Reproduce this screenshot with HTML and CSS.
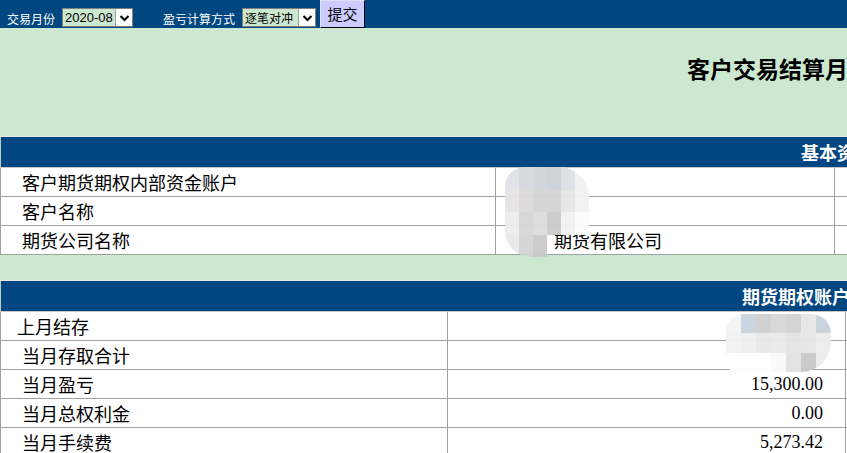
FILE: index.html
```html
<!DOCTYPE html>
<html lang="zh-CN">
<head>
<meta charset="utf-8">
<title>客户交易结算月报</title>
<link rel="stylesheet" href="styles.css">
</head>
<body>
<div class="page">
  <form class="topbar">
    <label class="lbl">交易月份</label>
    <span class="sel sel-month"><span class="sel-text">2020-08</span><span class="sel-btn"><svg width="11" height="8" viewBox="0 0 11 8"><path d="M1.5 2 L5.5 6 L9.5 2" fill="none" stroke="#000" stroke-width="2"/></svg></span></span>
    <label class="lbl lbl2">盈亏计算方式</label>
    <span class="sel sel-mode"><span class="sel-text">逐笔对冲</span><span class="sel-btn"><svg width="11" height="8" viewBox="0 0 11 8"><path d="M1.5 2 L5.5 6 L9.5 2" fill="none" stroke="#000" stroke-width="2"/></svg></span></span>
    <button type="button" class="submit">提交</button>
  </form>

  <div class="title-block">
    <h1 class="title">客户交易结算月报</h1>
  </div>

  <table class="tbl tbl1">
    <colgroup><col class="w1a"><col class="w1b"><col class="w1c"></colgroup>
    <tr><th colspan="3" class="hd hd1">基本资料</th></tr>
    <tr><td class="c1">客户期货期权内部资金账户</td><td class="c2 blur-host"><div class="blur blur1"><i></i><i></i><i></i><i></i><i></i><i></i><i></i><i></i><i></i><i></i><i></i><i></i><i></i><i></i><i></i><i></i><i></i><i></i><i></i><i></i><i></i><i></i><i></i><i></i></div></td><td class="c3"></td></tr>
    <tr><td class="c1">客户名称</td><td class="c2"></td><td class="c3"></td></tr>
    <tr><td class="c1">期货公司名称</td><td class="c2 co">期货有限公司</td><td class="c3"></td></tr>
  </table>

  <table class="tbl tbl2">
    <colgroup><col class="w2a"><col class="w2b"><col class="w2c"></colgroup>
    <tr><th colspan="3" class="hd hd2">期货期权账户资金状况</th></tr>
    <tr><td class="d1 first">上月结存</td><td class="d2 num blur-host"><div class="blur blur2"><i></i><i></i><i></i><i></i><i></i><i></i><i></i><i></i><i></i><i></i><i></i><i></i><i></i><i></i><i></i><i></i><i></i><i></i><i></i><i></i><i></i></div></td><td class="d3"></td></tr>
    <tr><td class="d1">当月存取合计</td><td class="d2 num"></td><td class="d3"></td></tr>
    <tr><td class="d1">当月盈亏</td><td class="d2 num">15,300.00</td><td class="d3"></td></tr>
    <tr><td class="d1">当月总权利金</td><td class="d2 num">0.00</td><td class="d3"></td></tr>
    <tr><td class="d1">当月手续费</td><td class="d2 num">5,273.42</td><td class="d3"></td></tr>
  </table>
</div>
</body>
</html>
```

FILE: styles.css
```css
html, body {
  margin: 0;
  padding: 0;
  background: #cde8d0;
  overflow: hidden;
}
.page {
  width: 1400px;
  font-family: "Noto Sans CJK SC", "Liberation Sans", sans-serif;
}
.topbar {
  display: flex;
  align-items: flex-start;
  height: 28px;
  background: #004680;
  margin: 0;
}
.lbl {
  color: #fff;
  font-size: 12px;
  line-height: 14px;
  margin-top: 12px;
  margin-left: 7px;
}
.lbl2 {
  margin-left: 30px;
}
.sel {
  display: flex;
  align-items: stretch;
  height: 19px;
  margin-top: 8px;
  margin-left: 7px;
  box-sizing: border-box;
  border: 1px solid #7f7f7f;
  background: #cde8d0;
  font-size: 13px;
}
.sel-month { width: 71px; }
.sel-mode { width: 74px; }
.sel-text {
  flex: 1;
  line-height: 17px;
  padding-left: 2px;
  color: #000;
  font-family: "Liberation Sans", "Noto Sans CJK SC", sans-serif;
}
.sel-mode .sel-text { font-family: "Noto Sans CJK SC", sans-serif; font-size: 12px; }
.sel-btn {
  width: 16px;
  background: #fff;
  border-left: 1px solid #a0a0a0;
  display: flex;
  align-items: center;
  justify-content: center;
}
.submit {
  margin-left: 4px;
  width: 45px;
  height: 28px;
  padding: 0;
  border: 1px solid #000;
  border-top-color: #e0e0ff;
  border-left-color: #e0e0ff;
  background: #ccccff;
  font-family: "Noto Sans CJK SC", sans-serif;
  font-size: 15px;
  line-height: 24px;
  color: #000;
}
.title-block {
  height: 108px;
  box-sizing: border-box;
  padding-top: 25px;
}
.title {
  margin: 0;
  padding-left: 687px;
  font-size: 23px;
  line-height: 30px;
  font-weight: bold;
  color: #000;
}
.tbl {
  border-collapse: collapse;
  table-layout: fixed;
  width: 1400px;
  border-top: 1px solid #e8e8e8;
  border-left: 1px solid #c8c8c8;
}
.w1a { width: 495px; }
.w1b { width: 339px; }
.w1c { width: 566px; }
.w2a { width: 447px; }
.w2b { width: 398px; }
.w2c { width: 555px; }
.tbl td {
  height: 28px;
  padding: 0;
  border: 1px solid #a0a0a0;
  background: #fff;
  font-size: 18px;
  line-height: 28px;
  color: #000;
  white-space: nowrap;
}
.hd {
  height: 30px;
  padding: 0;
  background: #004680;
  color: #fff;
  font-size: 18px;
  line-height: 30px;
  font-weight: bold;
  text-align: left;
  border: none;
  border-bottom: 1px solid #c8c8c8;
  white-space: nowrap;
}
.hd1 { padding-left: 800px; }
.hd2 { padding-left: 741px; }
.tbl2 { margin-top: 25px; }
.c1 { padding-left: 21px !important; }
.co { padding-left: 58px !important; }
.d1 { padding-left: 21px !important; }
.d1.first { padding-left: 16px !important; }
.num {
  text-align: right;
  padding-right: 22px !important;
  font-family: "Liberation Serif", serif;
}
.blur-host { position: relative; }
.blur {
  position: absolute;
  display: grid;
  filter: blur(0.6px);
  opacity: 0.95;
}
.blur i { display: block; }
.blur1 {
  left: 9px;
  top: -1px;
  width: 84px;
  height: 90px;
  grid-template-columns: repeat(6, 14px);
  grid-template-rows: repeat(4, 22.5px);
  border-radius: 20px 30px 16px 26px;
  overflow: hidden;
}
.blur1 i:nth-child(1) { background: #dfe2e6; }
.blur1 i:nth-child(2) { background: #d6d9de; }
.blur1 i:nth-child(3) { background: #d0d4da; }
.blur1 i:nth-child(4) { background: #ccd1d8; }
.blur1 i:nth-child(5) { background: #dde0e4; }
.blur1 i:nth-child(6) { background: #f0f1f2; }
.blur1 i:nth-child(7) { background: #e6e3e3; }
.blur1 i:nth-child(8) { background: #dcdada; }
.blur1 i:nth-child(9) { background: #d5d4d4; }
.blur1 i:nth-child(10) { background: #d3d3d3; }
.blur1 i:nth-child(11) { background: #e6e6e6; }
.blur1 i:nth-child(12) { background: #f2f2f2; }
.blur1 i:nth-child(13) { background: #ededed; }
.blur1 i:nth-child(14) { background: #d6d6d6; }
.blur1 i:nth-child(15) { background: #dcdcdc; }
.blur1 i:nth-child(16) { background: #cbcbcb; }
.blur1 i:nth-child(17) { background: #f2f2f2; }
.blur1 i:nth-child(18) { background: #fbfbfb; }
.blur1 i:nth-child(19) { background: #e8e8e8; }
.blur1 i:nth-child(20) { background: #d4d4d4; }
.blur1 i:nth-child(21) { background: #cacaca; }
.blur1 i:nth-child(22) { background: transparent; }
.blur1 i:nth-child(23) { background: transparent; }
.blur1 i:nth-child(24) { background: transparent; }
.blur2 {
  left: 278px;
  top: 2px;
  width: 105px;
  height: 58px;
  grid-template-columns: repeat(7, 15px);
  grid-template-rows: repeat(3, 19.3px);
  border-radius: 18px 20px 30px 10px;
  overflow: hidden;
}
.blur2 i:nth-child(1) { background: #f4f4f4; }
.blur2 i:nth-child(2) { background: #c8d4de; }
.blur2 i:nth-child(3) { background: #cfcfcf; }
.blur2 i:nth-child(4) { background: #d8d8d8; }
.blur2 i:nth-child(5) { background: #d2d2d2; }
.blur2 i:nth-child(6) { background: #e6e6e6; }
.blur2 i:nth-child(7) { background: #c8d2dc; }
.blur2 i:nth-child(8) { background: #f2f2f2; }
.blur2 i:nth-child(9) { background: #efefef; }
.blur2 i:nth-child(10) { background: #e8e8e8; }
.blur2 i:nth-child(11) { background: #eaeaea; }
.blur2 i:nth-child(12) { background: #e4e4e4; }
.blur2 i:nth-child(13) { background: #e6e6e6; }
.blur2 i:nth-child(14) { background: #ededed; }
.blur2 i:nth-child(15) { background: #ffffff; }
.blur2 i:nth-child(16) { background: #ffffff; }
.blur2 i:nth-child(17) { background: #ffffff; }
.blur2 i:nth-child(18) { background: #fafafa; }
.blur2 i:nth-child(19) { background: #e2e2e2; }
.blur2 i:nth-child(20) { background: #c9c9c9; }
.blur2 i:nth-child(21) { background: #ececec; }
```
